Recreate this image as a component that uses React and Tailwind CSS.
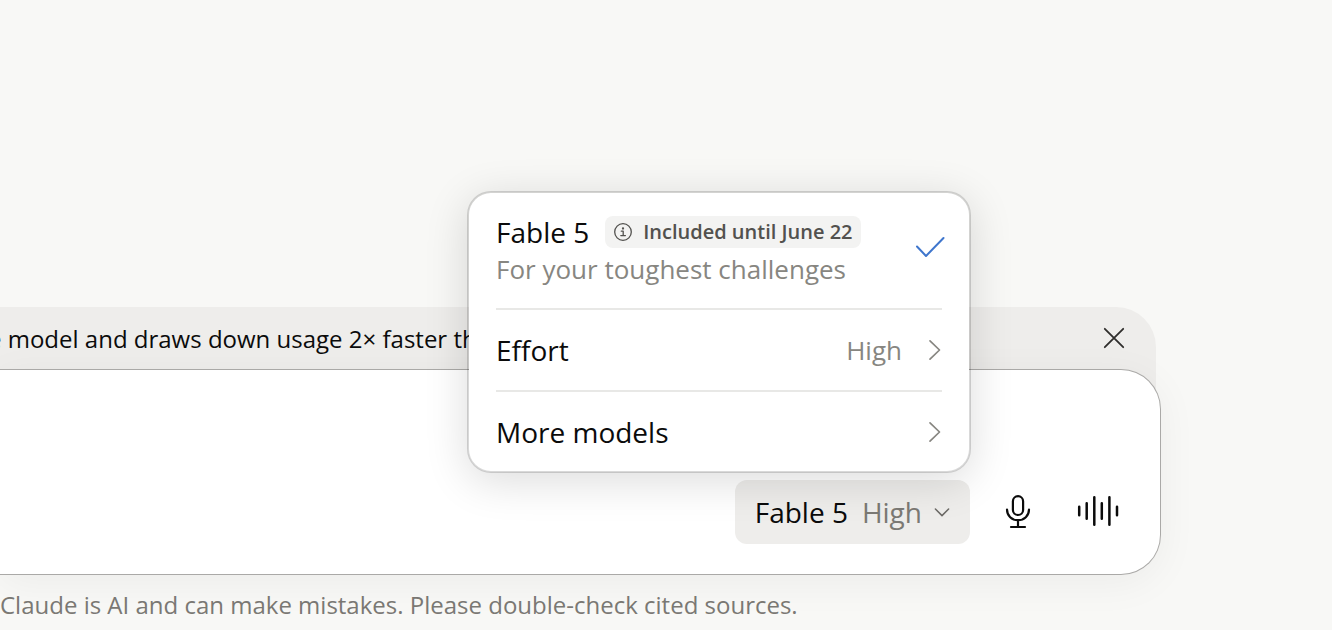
import React from 'react';

const InfoIcon = () => (
    <svg className="w-5 h-5 flex-shrink-0" viewBox="0 0 20 20" fill="none" stroke="currentColor" strokeWidth="1.3" strokeLinecap="round" strokeLinejoin="round" aria-hidden="true">
        <circle cx="10" cy="10" r="8.3" />
        <path d="M8.3 9.2H10.2V13.6M7.8 13.6H12.4" />
        <circle cx="10" cy="6.5" r="0.5" fill="currentColor" />
    </svg>
);

const CheckIcon = () => (
    <svg className="w-8 h-8 flex-shrink-0" viewBox="0 0 32 32" fill="none" stroke="currentColor" strokeWidth="2" strokeLinecap="round" strokeLinejoin="round" aria-hidden="true">
        <path d="M3 16.5L12 26L29.5 8" />
    </svg>
);

const ChevronRightIcon = () => (
    <svg className="w-4 h-6 flex-shrink-0" viewBox="0 0 16 24" fill="none" stroke="currentColor" strokeWidth="1.7" strokeLinecap="round" strokeLinejoin="round" aria-hidden="true">
        <path d="M4 2.8L13.5 12L4 21.2" />
    </svg>
);

const ChevronDownIcon = () => (
    <svg className="w-4 h-4 flex-shrink-0" viewBox="0 0 16 16" fill="none" stroke="currentColor" strokeWidth="1.5" strokeLinecap="round" strokeLinejoin="round" aria-hidden="true">
        <path d="M1.4 5L8 11.6L14.6 5" />
    </svg>
);

const CloseIcon = () => (
    <svg className="w-6 h-6" viewBox="0 0 24 24" fill="none" stroke="currentColor" strokeWidth="1.8" strokeLinecap="round" aria-hidden="true">
        <path d="M2.8 2.8L21.2 21.2M21.2 2.8L2.8 21.2" />
    </svg>
);

const MicIcon = () => (
    <svg className="w-12 h-12" viewBox="0 0 48 48" fill="none" stroke="currentColor" strokeWidth="2.2" strokeLinecap="round" aria-hidden="true">
        <rect x="18.9" y="8.2" width="10.2" height="18.8" rx="5.1" />
        <path d="M13 21.5C13 27.8 17.8 32.2 24 32.2S35 27.8 35 21.5M24 32.2V39M17 39H31" />
    </svg>
);

const VoiceIcon = () => (
    <svg className="w-12 h-12" viewBox="0 0 48 48" fill="none" stroke="currentColor" strokeWidth="2.5" strokeLinecap="round" aria-hidden="true">
        <path d="M5.2 18.8V27.2M12.7 15.2V30.8M20.3 9.2V36.8M27.8 15.2V30.8M35.4 9.2V36.8M43 18.8V27.2" />
    </svg>
);

const ModelMenu = () => (
    <div role="menu" className="absolute bottom-full -right-px mb-[7px] w-[504px] rounded-3xl border-2 border-black/15 bg-white bg-clip-padding px-[27px] text-[28px] leading-[38px] text-[#0b0b0b] shadow-[0_8px_44px_rgba(0,0,0,0.14)]">
        <button role="menuitem" className="flex w-full items-start justify-between pt-5 pb-[21px] text-left">
            <span>
                <span className="flex items-center gap-4 whitespace-nowrap">
                    Fable 5
                    <span className="flex h-8 items-center gap-2.5 rounded-lg bg-[#f3f3f2] px-2 text-[20px] font-semibold text-[#52514e]">
                        <InfoIcon />
                        Included until June 22
                    </span>
                </span>
                <span className="block text-[26px] leading-9 text-[#878681]">For your toughest challenges</span>
            </span>
            <span className="-mr-1 pt-[17px] text-[#3f76cd]">
                <CheckIcon />
            </span>
        </button>
        <button role="menuitem" className="flex h-[82px] w-full items-center justify-between border-t-2 border-[#e8e8e6] text-left">
            Effort
            <span className="flex items-center gap-6 text-[26px] text-[#878681]">
                High
                <ChevronRightIcon />
            </span>
        </button>
        <button role="menuitem" className="flex h-[81px] w-full items-center justify-between border-t-2 border-[#e8e8e6] text-left">
            More models
            <span className="text-[#878681]">
                <ChevronRightIcon />
            </span>
        </button>
    </div>
);

const Composer = () => (
    <div className="relative rounded-r-[40px] border border-l-0 border-[#aaa9a7] bg-white pr-[38px] pb-[30px] shadow-[0_8px_40px_rgba(0,0,0,0.05)]">
        <textarea aria-label="Message" rows={1} className="block h-[110px] w-full resize-none bg-transparent p-6 text-2xl outline-none" />
        <div className="flex items-center justify-end">
            <div className="relative">
                <button aria-haspopup="menu" aria-expanded="true" className="flex h-16 items-center whitespace-nowrap rounded-xl bg-[#eeedeb] px-5 text-[28px] text-[#0b0b0b]">
                    Fable 5
                    <span className="ml-3.5 mr-3 text-[#7b7974]">High</span>
                    <span className="text-[#6b6965]">
                        <ChevronDownIcon />
                    </span>
                </button>
                <ModelMenu />
            </div>
            <button aria-label="Dictate" className="ml-6 text-[#0b0b0b]">
                <MicIcon />
            </button>
            <button aria-label="Voice mode" className="ml-8 text-[#0b0b0b]">
                <VoiceIcon />
            </button>
        </div>
    </div>
);

const App = () => {
    return (
        <main className="flex min-h-screen flex-col justify-end overflow-hidden bg-[#f8f8f6] pr-[171px] font-['Open_Sans',sans-serif]">
            <div className="-mb-10 mr-[5px] flex items-center justify-between rounded-tr-[40px] bg-[#eeedeb] pr-[30px] pb-10">
                <p className="-ml-3 h-[62px] whitespace-nowrap text-2xl leading-[64px] text-[#0b0b0b]">e model and draws down usage 2× faster than</p>
                <button aria-label="Dismiss" className="text-[#2f2e2c]">
                    <CloseIcon />
                </button>
            </div>
            <Composer />
            <p className="h-[55px] whitespace-nowrap text-2xl leading-[60px] text-[#7b7974]">Claude is AI and can make mistakes. Please double-check cited sources.</p>
        </main>
    );
};

export default App;
